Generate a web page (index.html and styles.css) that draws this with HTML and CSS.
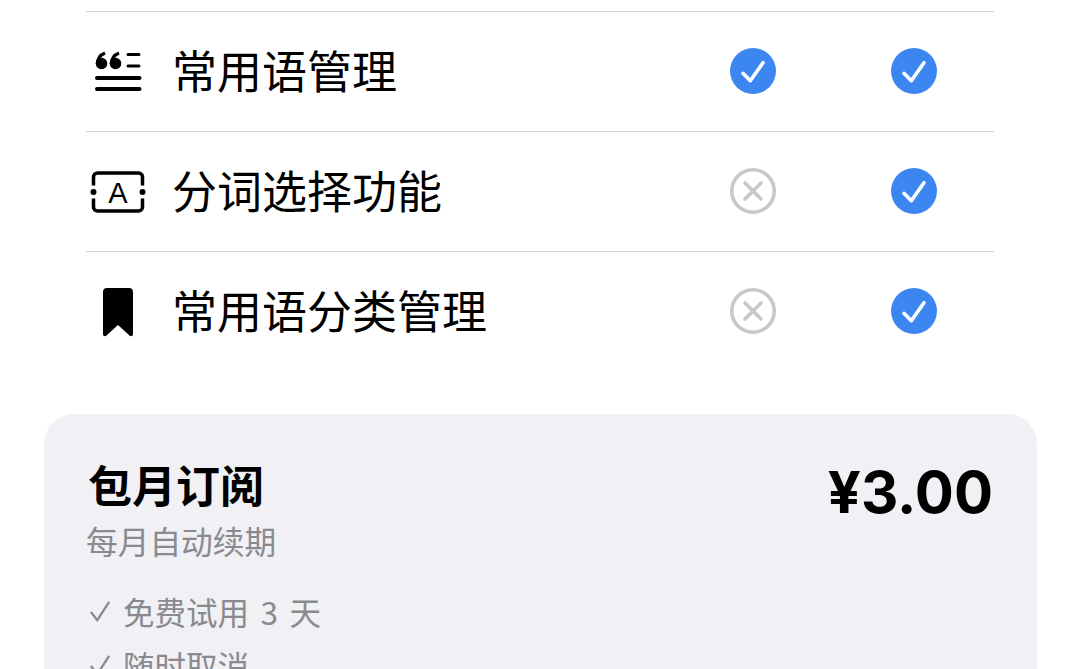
FILE: index.html
```html
<html>
<head>
<title>常用语管理</title>
<meta name="viewport" content="width=device-width,initial-scale=1">
<link rel="stylesheet" href="styles.css">
</head>
<body>
  <div class="features">
    <div class="row">
      <svg class="icon" viewBox="0 0 60 60">
        <circle cx="15.500" cy="21.500" r="5.800" />
        <circle cx="29.500" cy="21.500" r="5.800" />
        <path class="tail" d="M11.500 22c0-5 2.500-9 7.500-11M25.500 22c0-5 2.500-9 7.500-11" />
        <path class="line" d="M42 12.500h11M42 24h11" />
        <path class="line thick" d="M11 36h42.500M11 47h42.500" />
      </svg>
      <div class="label">常用语管理</div>
      <svg class="mark" viewBox="0 0 46 46"><circle class="on" cx="23" cy="23" r="23" /><path class="tick" d="M13 25.300 20.300 32.700 33 14.700" /></svg>
      <svg class="mark" viewBox="0 0 46 46"><circle class="on" cx="23" cy="23" r="23" /><path class="tick" d="M13 25.300 20.300 32.700 33 14.700" /></svg>
    </div>
    <div class="row">
      <svg class="icon" viewBox="0 0 60 60">
        <path class="frame" d="M7.500 23.500v-8.500a4 4 0 0 1 4-4h41a4 4 0 0 1 4 4v8.500M7.500 36.500v8.500a4 4 0 0 0 4 4h41a4 4 0 0 0 4-4v-8.500" />
        <circle cx="7.500" cy="30" r="3" />
        <circle cx="56.500" cy="30" r="3" />
        <text class="icon-letter" x="32" y="40.500">A</text>
      </svg>
      <div class="label">分词选择功能</div>
      <svg class="mark" viewBox="0 0 46 46"><circle class="off" cx="23" cy="23" r="21.200" /><path class="cross" d="M15 15 31 31M31 15 15 31" /></svg>
      <svg class="mark" viewBox="0 0 46 46"><circle class="on" cx="23" cy="23" r="23" /><path class="tick" d="M13 25.300 20.300 32.700 33 14.700" /></svg>
    </div>
    <div class="row">
      <svg class="icon" viewBox="0 0 60 60">
        <path d="M21 6h22a4 4 0 0 1 4 4v42c0 2-2 3-3.500 1.600L32 43 20.500 53.600C19 55 17 54 17 52V10a4 4 0 0 1 4-4z" />
      </svg>
      <div class="label">常用语分类管理</div>
      <svg class="mark" viewBox="0 0 46 46"><circle class="off" cx="23" cy="23" r="21.200" /><path class="cross" d="M15 15 31 31M31 15 15 31" /></svg>
      <svg class="mark" viewBox="0 0 46 46"><circle class="on" cx="23" cy="23" r="23" /><path class="tick" d="M13 25.300 20.300 32.700 33 14.700" /></svg>
    </div>
  </div>
  <div class="plan">
    <div class="plan-head">
      <div>
        <div class="plan-title">包月订阅</div>
        <div class="plan-sub">每月自动续期</div>
      </div>
      <div class="plan-price">¥3.00</div>
    </div>
    <div class="perks">
      <div class="perk"><svg class="perk-tick" viewBox="0 0 24 24"><path d="M2 13 9 22 22 2" /></svg>免费试用 3 天</div>
      <div class="perk"><svg class="perk-tick" viewBox="0 0 24 24"><path d="M2 13 9 22 22 2" /></svg>随时取消</div>
    </div>
  </div>
</body>
</html>
```
FILE: styles.css
```css
html,body { margin: 0; padding: 0; height: 669px; overflow: hidden; background: #fff; font-family: "Noto Sans CJK SC", "Liberation Sans", sans-serif; color: #000; }
.features { margin: 11px 86px 0; }
.row { display: flex; align-items: center; height: 119px; border-top: 1px solid #d2d2d2; padding-right: 57px; }
.icon { width: 60px; height: 60px; margin-right: 26px; flex: none; }
.tail { fill: none; stroke: #000; stroke-width: 3.500; }
.line { fill: none; stroke: #000; stroke-width: 3; stroke-linecap: round; }
.line.thick { stroke-width: 4; }
.frame { fill: none; stroke: #000; stroke-width: 3.500; }
.icon-letter { font-family: "Liberation Sans", sans-serif; font-size: 29px; text-anchor: middle; }
.label { flex: 1; font-size: 45px; line-height: 60px; padding-bottom: 4px; }
.mark { width: 46px; height: 46px; flex: none; margin-left: 115px; margin-bottom: 1px; }
.mark:first-of-type { margin-left: 0; }
.on { fill: #3b86f0; }
.tick { fill: none; stroke: #fff; stroke-width: 3.600; stroke-linecap: round; stroke-linejoin: round; }
.off { fill: none; stroke: #c8c8c8; stroke-width: 3.600; }
.cross { fill: none; stroke: #c8c8c8; stroke-width: 3.600; stroke-linecap: round; }
.plan { margin: 43px 43px 0 44px; padding: 40px 44px 40px 42px; background: #f0f0f5; border-radius: 30px; }
.plan-head { display: flex; justify-content: space-between; align-items: flex-start; }
.plan-title { font-size: 44px; font-weight: bold; line-height: 60px; margin-left: 2px; }
.plan-sub { font-size: 31.700px; line-height: 44px; color: #8a8a8e; margin-top: 4px; }
.plan-price { font-family: Inter, "Liberation Sans", sans-serif; font-size: 58px; font-weight: 700; line-height: 76px; }
.perks { margin-top: 22px; }
.perk { display: flex; align-items: center; font-size: 31.500px; line-height: 54px; color: #8a8a8e; white-space: pre; word-spacing: 4.500px; }
.perk-tick { width: 22px; height: 22px; margin: 0 12px 0 3px; flex: none; }
.perk-tick path { fill: none; stroke: #8a8a8e; stroke-width: 2.500; }
```
